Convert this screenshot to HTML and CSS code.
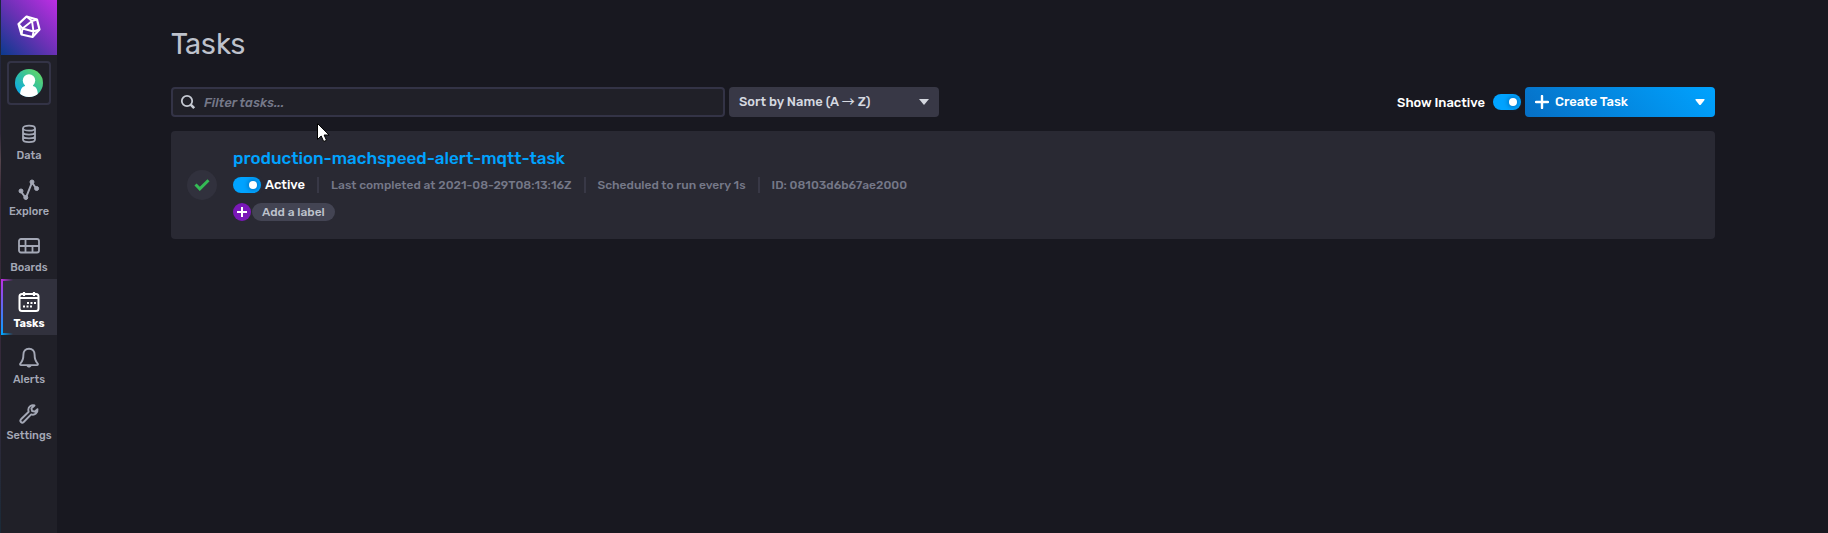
FILE: index.html
```html
<!DOCTYPE html>
<html lang="en">
<head>
<meta charset="utf-8">
<title>Tasks</title>
<link rel="stylesheet" href="styles.css">
</head>
<body>
<div class="app">
  <nav class="sidebar" aria-label="Main">
    <a class="logo" href="#" aria-label="Home">
      <svg width="24" height="24" viewBox="0 0 24 24" fill="none" stroke="#fff" stroke-width="2.200" stroke-linejoin="round"><path d="M9.500 1.500 20 4.500 22.500 14.500 15.500 22 4.500 19.500 1.500 9Z"/><path d="M15 6 5.500 13.500 16.500 16.500ZM15 6 20 4.500M15 6 9.500 1.500M5.500 13.500 1.500 9M5.500 13.500 4.500 19.500M16.500 16.500 22.500 14.500M16.500 16.500 15.500 22" stroke-width="1.900"/></svg>
    </a>
    <button class="user" type="button" aria-label="Account">
      <svg width="28" height="28" viewBox="0 0 28 28"><defs><linearGradient id="av" x1="0" y1="1" x2="1" y2="0"><stop offset="0" stop-color="#00a3ff"/><stop offset=".5" stop-color="#32c0a0"/><stop offset="1" stop-color="#6fdc58"/></linearGradient><clipPath id="round"><circle cx="14" cy="14" r="14"/></clipPath></defs><g clip-path="url(#round)"><path fill="url(#av)" d="M0 0h28v28H0z"/><circle cx="14" cy="11.500" r="6.200" fill="#fff"/><path fill="#fff" d="M10 15h8v2c3.500.8 5 4 5 11H5c0-7 1.500-10.200 5-11z"/></g></svg>
    </button>
    <a class="item" href="#">
      <svg width="22" height="22" viewBox="0 0 22 22" fill="none" stroke="currentColor" stroke-width="1.800"><ellipse cx="11" cy="5.200" rx="6" ry="2.500"/><path d="M5 5.200v11.300c0 1.500 2.700 2.600 6 2.600s6-1.100 6-2.600V5.200M5 9c0 1.500 2.700 2.600 6 2.600s6-1.100 6-2.600M5 12.800c0 1.500 2.700 2.600 6 2.600s6-1.100 6-2.600"/></svg>
      <span>Data</span></a>
    <a class="item" href="#">
      <svg width="22" height="22" viewBox="0 0 22 22" fill="currentColor" stroke="currentColor"><path d="M3 12.500 7.800 19 14 3.500 18.600 10" fill="none" stroke-width="2"/><circle cx="3" cy="12" r="2"/><circle cx="7.800" cy="18.500" r="2"/><circle cx="14" cy="3" r="2"/><circle cx="18.600" cy="9.500" r="2"/></svg>
      <span>Explore</span></a>
    <a class="item" href="#">
      <svg width="22" height="22" viewBox="0 0 22 22" fill="none" stroke="currentColor" stroke-width="1.800"><rect x="1" y="4" width="20" height="13.500" rx="2"/><path d="M1 11h20M7.500 4v13.500M14.500 11v6.500"/></svg>
      <span>Boards</span></a>
    <a class="item active" href="#" aria-current="page">
      <svg width="22" height="22" viewBox="0 0 22 22" fill="none" stroke="currentColor"><rect x="1.500" y="3" width="19" height="17" rx="2.500" stroke-width="2"/><path d="M1.500 7h19M6 1v4M16 1v4" stroke-width="2.200"/><path d="M9 12h2M12.500 12h2M16 12h2M5 15.500h2M8.500 15.500h2M12 15.500h2" stroke-width="2"/></svg>
      <span>Tasks</span></a>
    <a class="item" href="#">
      <svg width="22" height="22" viewBox="0 0 22 22" fill="none" stroke="currentColor" stroke-width="1.900" stroke-linejoin="round"><path d="M11 1.800c-3.600 0-5.600 2.500-5.600 6 0 4-.9 6.500-2.900 8.500-.8.900-.5 1.800.6 1.800h15.800c1.100 0 1.400-.9.600-1.800-2-2-2.900-4.500-2.900-8.500 0-3.500-2-6-5.600-6z"/><path d="M8.500 18.500c.5 2.800 4.500 2.800 5 0z" fill="currentColor" stroke="none"/></svg>
      <span>Alerts</span></a>
    <a class="item" href="#">
      <svg width="22" height="22" viewBox="0 0 22 22" fill="none" stroke="currentColor" stroke-width="1.900" stroke-linejoin="round"><path d="M16.500 2.500c-2.800-1-6.200 1-6.200 4.200 0 .8.200 1.500.4 2.100L3 16.300c-1.800 1.900.8 4.500 2.700 2.700l7.500-7.600c3.500 1.200 6.800-1.800 6.300-5.300L16.700 8.700l-2.600-.7-.7-2.600z"/></svg>
      <span>Settings</span></a>
  </nav>

  <main class="page">
    <h1 class="title">Tasks</h1>
    <div class="toolbar">
      <label class="search">
        <svg width="16" height="16" viewBox="0 0 16 16" fill="none" stroke="#c6cad3" stroke-width="1.800"><circle cx="7" cy="7" r="5.200"/><path d="m10.700 10.700 3.500 3.500" stroke-width="2.600"/></svg>
        <input type="text" placeholder="Filter tasks..." aria-label="Filter tasks">
      </label>
      <div class="sort">
        <select aria-label="Sort tasks"><option>Sort by Name (A → Z)</option><option>Sort by Name (Z → A)</option></select>
      </div>
      <label class="inactive" for="show-inactive">Show Inactive</label>
      <input class="toggle" id="show-inactive" type="checkbox" checked>
      <button class="create" type="button">
        <svg width="14" height="14" viewBox="0 0 14 14" stroke="#fff" stroke-width="2.400" stroke-linecap="round"><path d="M7 1v12M1 7h12"/></svg>
        <span class="create-text">Create Task</span>
        <svg class="caret" width="10" height="6" viewBox="0 0 10 6" fill="#fff"><path d="M1 0h8q1 0 .5 1L6 5.500q-1 1-2 0L.5 1Q0 0 1 0z"/></svg>
      </button>
    </div>

    <article class="card">
      <div class="status"><svg width="16" height="12" viewBox="0 0 16 12" fill="none" stroke="#34bb55" stroke-width="3"><path d="M1.500 5.500 5.800 9.800 14.500 1.200"/></svg></div>
      <div class="body">
        <a class="name" href="#">production-machspeed-alert-mqtt-task</a>
        <div class="meta">
          <label class="state"><input class="toggle" type="checkbox" checked>Active</label>
          <span class="fact">Last completed at 2021-08-29T08:13:16Z</span>
          <span class="fact">Scheduled to run every 1s</span>
          <span class="fact">ID: 08103d6b67ae2000</span>
        </div>
        <div class="labels">
          <button class="add" type="button" aria-label="Add"><svg width="10" height="10" viewBox="0 0 10 10" stroke="#fff" stroke-width="2"><path d="M5 0v10M0 5h10"/></svg></button>
          <button class="pill" type="button">Add a label</button>
        </div>
      </div>
    </article>
  </main>
  <svg class="cursor" width="14" height="20" viewBox="0 0 14 20"><path d="M.5.5v16l3.700-3.500 2.500 5.500 2.800-1.200L7.100 12h5z" fill="#fff" stroke="#000"/></svg>
</div>
</body>
</html>
```
FILE: styles.css
```css
* { box-sizing: border-box; }
body { margin: 0; background: #181820; color: #fff; font-family: Rubik, Roboto, "Noto Sans CJK JP", sans-serif; font-size: 13px; font-weight: 500; }
button, input, select { font: inherit; color: inherit; border: 0; margin: 0; padding: 0; }
svg { flex: none; display: block; }
a { text-decoration: none; }

.app { display: flex; min-height: 100vh; }

.sidebar { width: 57px; flex: none; display: flex; flex-direction: column; padding-left: 1px; background: linear-gradient(#1c2740, #2e2638 25%, #54444c 30%, #3a2a3a 36%, #33293a 75%, #1a2a38) 0 0 / 1px 100% no-repeat, #202028; }
.logo { height: 55px; display: flex; align-items: center; justify-content: center; padding-bottom: 2px; background: linear-gradient(45deg, #0b3a8d, #6b31b5 50%, #be2ee4); }
.user { width: 44px; height: 44px; margin: 6px; display: flex; align-items: center; justify-content: center; background: transparent; border: 2px solid #333346; border-radius: 4px; }
.item { height: 56px; display: flex; flex-direction: column; align-items: center; gap: 4px; padding-top: 12px; color: #a4a8b6; font-size: 11px; line-height: 14px; }
.item.active { color: #fff; font-weight: 700; background: linear-gradient(90deg, #be2ee4, transparent 12px) 0 0 / 12px 2px no-repeat, linear-gradient(90deg, #00a3ff, transparent 12px) 0 100% / 12px 2px no-repeat, linear-gradient(#be2ee4, #00a3ff) 0 0 / 2px 100% no-repeat, #31313d; }

.page { flex: 1; min-width: 0; padding: 27px 113px 0 114px; }
.title { margin: 0 0 26px; font-size: 29px; line-height: 34px; font-weight: 400; color: #bec2cc; }

.toolbar { display: flex; align-items: center; gap: 4px; margin-bottom: 14px; }
.search { width: 36%; max-width: 554px; height: 30px; display: flex; align-items: center; gap: 8px; padding: 0 7px; background: #202028; border: 2px solid #333346; border-radius: 4px; }
.search input { flex: 1; min-width: 0; background: transparent; outline: 0; }
.search input::placeholder { color: #757888; font-style: italic; opacity: 1; }
.sort { width: 210px; position: relative; }
.sort select { width: 100%; height: 30px; padding: 0 10px 2px; appearance: none; background: #383846; color: #d5d8e0; border-radius: 4px; }
.sort::after { content: ""; position: absolute; right: 10px; top: 12px; border: 5px solid transparent; border-top: 6px solid #d5d8e0; border-bottom: 0; }
.inactive { margin: 0 4px 0 auto; }
.toggle { flex: none; appearance: none; width: 28px; height: 16px; padding: 4px; display: flex; justify-content: flex-end; border-radius: 8px; background: #00a3ff; }
.toggle::before { content: ""; width: 8px; height: 8px; border-radius: 50%; background: #fff; box-shadow: 0 0 5px 1px #006bb8; }
.create { width: 190px; height: 30px; display: flex; align-items: center; gap: 6px; padding: 0 10px; border-radius: 4px; background: linear-gradient(45deg, #066fc5, #00a3ff); }
.create-text { padding-bottom: 2px; }
.caret { margin-left: auto; }

.card { display: flex; align-items: center; gap: 16px; padding: 16px; background: #292933; border-radius: 4px; }
.status { width: 30px; height: 30px; display: flex; align-items: center; justify-content: center; border-radius: 50%; background: #31313d; }
.body { padding-bottom: 2px; }
.name { display: block; margin-bottom: 7px; font-size: 17px; line-height: 23px; color: #00a3ff; }
.meta { display: flex; align-items: center; color: #757888; font-size: 12px; line-height: 16px; }
.state { display: flex; align-items: center; gap: 4px; color: #fff; font-size: 13px; }
.fact { margin-left: 12px; padding-left: 12px; border-left: 2px solid #383846; }
.labels { display: flex; gap: 1px; margin-top: 10px; }
.add { width: 18px; height: 18px; display: flex; align-items: center; justify-content: center; border-radius: 50%; background: #7a18b8; }
.pill { height: 18px; padding: 0 10px; border-radius: 9px; background: #434453; color: #bec2cc; font-size: 12px; line-height: 18px; }

.cursor { position: absolute; left: 317px; top: 123px; }
```
